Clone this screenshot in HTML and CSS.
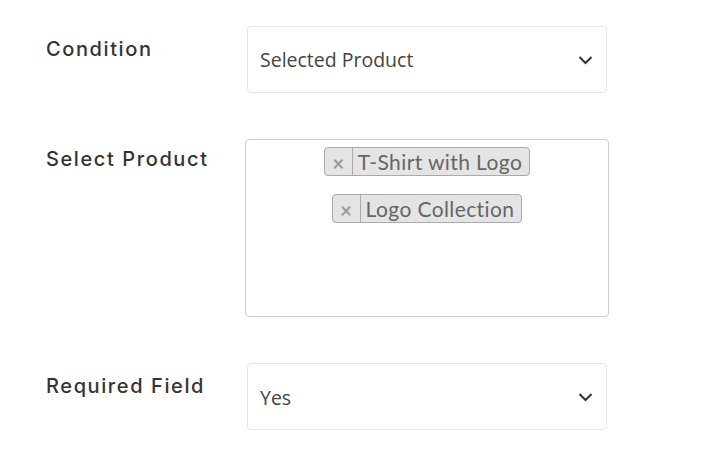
FILE: index.html
```html
<!DOCTYPE html>
<html lang="en">
<head>
  <meta charset="UTF-8">
  <title>Field settings</title>
  <link rel="stylesheet" href="styles.css">
</head>
<body>

<div class="form-grid">
  <label class="field-label">Condition</label>
  <div class="select-box">
    <span class="select-value">Selected Product</span>
    <svg class="chevron" width="15" height="10" viewBox="0 0 15 10"><path d="M1.5 2 L7.5 8 L13.5 2" fill="none" stroke="#333" stroke-width="2"/></svg>
  </div>

  <label class="field-label tight">Select Product</label>
  <div class="multi-box">
    <div class="tag"><span class="tag-remove">×</span><span class="tag-text">T-Shirt with Logo</span></div>
    <div class="tag"><span class="tag-remove">×</span><span class="tag-text">Logo Collection</span></div>
  </div>

  <label class="field-label">Required Field</label>
  <div class="select-box">
    <span class="select-value low">Yes</span>
    <svg class="chevron" width="15" height="10" viewBox="0 0 15 10"><path d="M1.5 2 L7.5 8 L13.5 2" fill="none" stroke="#333" stroke-width="2"/></svg>
  </div>
</div>

</body>
</html>
```

FILE: styles.css
```css
body {
    margin: 0;
    background: #fff;
    font-family: 'Lato', sans-serif;
}
.form-grid {
    display: grid;
    grid-template-columns: 201px 360px;
    row-gap: 46px;
    padding: 26px 0 0 46px;
}
.field-label {
    font-family: 'Inter', sans-serif;
    font-size: 20px;
    font-weight: 500;
    line-height: 24px;
    padding-top: 11px;
    color: #333;
    letter-spacing: 1.6px;
}
.field-label.tight {
    padding-top: 8px;
}
.select-box {
    height: 67px;
    box-sizing: border-box;
    border: 1px solid #e6e6e6;
    border-radius: 4px;
    display: flex;
    align-items: center;
    justify-content: space-between;
    padding: 0 13px 0 12px;
}
.select-value {
    font-family: 'Open Sans', sans-serif;
    font-size: 19.5px;
    color: #444;
}
.select-value.low {
    padding-top: 2px;
}
.chevron {
    display: block;
    margin-top: 1px;
}
.multi-box {
    margin-left: -2px;
    width: 364px;
    height: 178px;
    box-sizing: border-box;
    border: 1px solid #ccc;
    border-radius: 4px;
    display: flex;
    flex-direction: column;
    align-items: center;
    gap: 18px;
    padding-top: 7px;
}
.tag {
    display: flex;
    align-items: center;
    height: 29px;
    box-sizing: border-box;
    background: #e4e4e4;
    border: 1px solid #aaa;
    border-radius: 4px;
    color: #666;
}
.tag-remove {
    width: 28px;
    height: 100%;
    box-sizing: border-box;
    border-right: 1px solid #aaa;
    display: flex;
    align-items: center;
    justify-content: center;
    color: #999;
    font-weight: bold;
    font-size: 20px;
    padding-top: 2px;
}
.tag-text {
    font-size: 21px;
    letter-spacing: 0.4px;
    padding: 0 7px 0 5px;
}
```
